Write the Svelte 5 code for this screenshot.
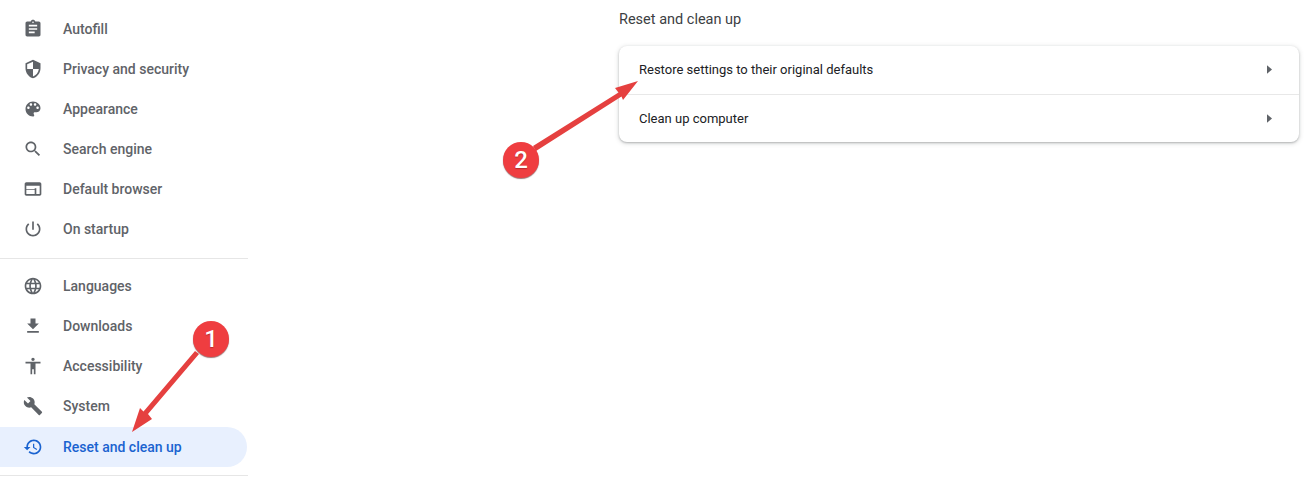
<script>
  const groupA = [
    { label: 'Autofill', d: 'M19 3h-4.18C14.4 1.84 13.3 1 12 1s-2.4.84-2.82 2H5c-1.1 0-2 .9-2 2v14c0 1.1.9 2 2 2h14c1.1 0 2-.9 2-2V5c0-1.1-.9-2-2-2zm-7 0c.55 0 1 .45 1 1s-.45 1-1 1-1-.45-1-1 .45-1 1-1zm2 14H7v-2h7v2zm3-4H7v-2h10v2zm0-4H7V7h10v2z' },
    { label: 'Privacy and security', d: 'M12 1 3 5v6c0 5.55 3.84 10.74 9 12 5.16-1.26 9-6.45 9-12V5l-9-4zm0 10.99h7c-.53 4.12-3.28 7.79-7 8.94V12H5V6.3l7-3.11v8.8z' },
    { label: 'Appearance', d: 'M12 3c-4.97 0-9 4.03-9 9s4.03 9 9 9c.83 0 1.5-.67 1.5-1.5 0-.39-.15-.74-.39-1.01-.23-.26-.38-.61-.38-.99 0-.83.67-1.5 1.5-1.5H16c2.76 0 5-2.24 5-5 0-4.42-4.03-8-9-8zm-5.5 9c-.83 0-1.5-.67-1.5-1.5S5.67 9 6.5 9 8 9.67 8 10.5 7.33 12 6.5 12zm3-4C8.67 8 8 7.33 8 6.5S8.67 5 9.5 5s1.5.67 1.5 1.5S10.33 8 9.5 8zm5 0c-.83 0-1.5-.67-1.5-1.5S13.67 5 14.5 5s1.5.67 1.5 1.5S15.33 8 14.5 8zm3 4c-.83 0-1.5-.67-1.5-1.5S16.67 9 17.5 9s1.5.67 1.5 1.5-.67 1.5-1.5 1.5z' },
    { label: 'Search engine', d: 'M15.5 14h-.79l-.28-.27C15.41 12.59 16 11.11 16 9.5 16 5.91 13.09 3 9.5 3S3 5.91 3 9.5 5.91 16 9.5 16c1.61 0 3.09-.59 4.23-1.57l.27.28v.79l5 4.99L20.49 19l-4.99-5zm-6 0C7.01 14 5 11.99 5 9.5S7.01 5 9.5 5 14 7.01 14 9.5 11.99 14 9.5 14z' },
    { label: 'Default browser', d: 'M20 4H4c-1.11 0-2 .9-2 2v12c0 1.1.89 2 2 2h16c1.1 0 2-.9 2-2V6c0-1.1-.89-2-2-2zm-6 14H4v-5h10v5zm6 0h-4v-7h-2v1H4V8h16v10z' },
    { label: 'On startup', d: 'M13 3h-2v10h2V3zm4.83 2.17-1.42 1.42C17.99 7.86 19 9.81 19 12c0 3.87-3.13 7-7 7s-7-3.13-7-7c0-2.19 1.01-4.14 2.58-5.42L6.17 5.17C4.23 6.82 3 9.26 3 12c0 4.97 4.03 9 9 9s9-4.03 9-9c0-2.74-1.23-5.18-3.17-6.83z' }
  ];
  const groupB = [
    { label: 'Languages', d: 'M11.99 2C6.47 2 2 6.48 2 12s4.47 10 9.99 10C17.52 22 22 17.52 22 12S17.52 2 11.99 2zm6.93 6h-2.95c-.32-1.25-.78-2.45-1.38-3.56 1.84.63 3.37 1.91 4.33 3.56zM12 4.04c.83 1.2 1.48 2.53 1.91 3.96h-3.82c.43-1.43 1.08-2.76 1.91-3.96zM4.26 14C4.1 13.36 4 12.69 4 12s.1-1.36.26-2h3.38c-.08.66-.14 1.32-.14 2s.06 1.34.14 2H4.26zm.82 2h2.95c.32 1.25.78 2.45 1.38 3.56-1.84-.63-3.37-1.9-4.33-3.56zm2.95-8H5.08c.96-1.66 2.49-2.93 4.33-3.56C8.81 5.55 8.35 6.75 8.03 8zM12 19.96c-.83-1.2-1.48-2.53-1.91-3.96h3.82c-.43 1.43-1.08 2.76-1.91 3.96zM14.34 14H9.66c-.09-.66-.16-1.32-.16-2s.07-1.35.16-2h4.68c.09.65.16 1.32.16 2s-.07 1.34-.16 2zm.25 5.56c.6-1.11 1.06-2.31 1.38-3.56h2.95c-.96 1.65-2.49 2.93-4.33 3.56zM16.36 14c.08-.66.14-1.32.14-2s-.06-1.34-.14-2h3.38c.16.64.26 1.31.26 2s-.1 1.36-.26 2h-3.38z' },
    { label: 'Downloads', d: 'M19 9h-4V3H9v6H5l7 7 7-7zM5 18v2h14v-2H5z' },
    { label: 'Accessibility', d: 'M12 2c1.1 0 2 .9 2 2s-.9 2-2 2-2-.9-2-2 .9-2 2-2zm9 7h-6v13h-2v-6h-2v6H9V9H3V7h18v2z' },
    { label: 'System', d: 'M22.7 19l-9.1-9.1c.9-2.3.4-5-1.5-6.9-2-2-5-2.4-7.4-1.3L9 6 6 9 1.6 4.7C.4 7.1.9 10.1 2.9 12.1c1.9 1.9 4.6 2.4 6.9 1.5l9.1 9.1c.4.4 1 .4 1.4 0l2.3-2.3c.5-.4.5-1.1.1-1.4z' },
    { label: 'Reset and clean up', active: true, d: 'M13 3c-4.97 0-9 4.03-9 9H1l3.89 3.89.07.14L9 12H6c0-3.87 3.13-7 7-7s7 3.13 7 7-3.13 7-7 7c-1.93 0-3.68-.79-4.94-2.06l-1.42 1.42C8.27 19.99 10.51 21 13 21c4.97 0 9-4.03 9-9s-4.03-9-9-9zm-1 5v5l4.28 2.54.72-1.21-3.5-2.08V8H12z' }
  ];
  const rows = ['Restore settings to their original defaults', 'Clean up computer'];
</script>

<div class="page">
  <nav class="sidebar">
    <ul class="group">
      {#each groupA as item}
        <li class="item">
          <svg class="icon" viewBox="0 0 24 24"><path d={item.d} /></svg>
          <span>{item.label}</span>
        </li>
      {/each}
    </ul>
    <hr class="rule" />
    <ul class="group">
      {#each groupB as item}
        <li class="item" class:active={item.active}>
          <svg class="icon" viewBox="0 0 24 24"><path d={item.d} /></svg>
          <span>{item.label}</span>
        </li>
      {/each}
    </ul>
    <hr class="rule end" />
  </nav>

  <main class="main">
    <h2 class="title">Reset and clean up</h2>
    <section class="card">
      {#each rows as row}
        <div class="row">
          <span>{row}</span>
          <svg class="caret" viewBox="0 0 6 10"><path d="M0 0l6 5-6 5z" /></svg>
        </div>
      {/each}
    </section>
  </main>

  <svg class="arrows" width="1309" height="479" viewBox="0 0 1309 479">
    <path class="arrow" d="M132 432 140 408 143.5 411.5 195 351 199 354 148 414 152 419z" />
    <path class="arrow" d="M638 81 615 88 618.5 92.5 533 146 536 151 621.5 96.5 623 100z" />
  </svg>
  <div class="badge one">1</div>
  <div class="badge two">2</div>
</div>

<style>
  :global(body) {
    margin: 0;
    background: #fff;
    overflow: hidden;
  }
  .page {
    position: relative;
    display: flex;
    width: 1309px;
    height: 479px;
    overflow: hidden;
    font-family: Roboto, "Liberation Sans", sans-serif;
  }
  .sidebar {
    flex: none;
    width: 248px;
    padding-top: 9px;
    box-sizing: border-box;
  }
  .group {
    list-style: none;
    margin: 0;
    padding: 0;
  }
  .rule {
    margin: 9px 0 7px;
    border: 0;
    height: 1px;
    background: #e6e6e6;
  }
  .rule.end {
    margin: 8px 0 0;
  }
  .item {
    display: flex;
    align-items: center;
    height: 40px;
    width: 247px;
    padding-left: 23px;
    box-sizing: border-box;
    border-radius: 0 20px 20px 0;
    color: #5f6368;
    font-size: 14px;
    font-weight: 500;
  }
  .item.active {
    margin-top: 1px;
    background: #e8f0fe;
    color: #1a63d0;
  }
  .icon {
    flex: none;
    width: 20px;
    height: 20px;
    margin-right: 20px;
    fill: #5f6368;
  }
  .item.active .icon {
    fill: #1a63d0;
  }
  .main {
    flex: none;
    width: 680px;
    margin-left: 371px;
  }
  .title {
    margin: 0;
    height: 46px;
    line-height: 39px;
    font-size: 14.5px;
    font-weight: 400;
    color: #3c4043;
  }
  .card {
    width: 680px;
    border-radius: 8px;
    background: #fff;
    box-shadow: 0 1px 2px rgba(60, 64, 67, 0.3), 0 1px 4px 1px rgba(60, 64, 67, 0.15);
  }
  .row {
    display: flex;
    align-items: center;
    justify-content: space-between;
    height: 48px;
    padding: 0 27px 0 20px;
    box-sizing: border-box;
    font-size: 13px;
    color: #202124;
  }
  .row:first-child {
    padding-bottom: 2px;
  }
  .row + .row {
    border-top: 1px solid #e8e8e8;
  }
  .caret {
    width: 5px;
    height: 9px;
    fill: #5f6368;
  }
  .arrows {
    position: absolute;
    inset: 0;
    pointer-events: none;
  }
  .arrow {
    fill: #e5403f;
  }
  .badge {
    position: absolute;
    width: 36px;
    height: 36px;
    border-radius: 50%;
    background: #ef3d40;
    box-shadow: 0 1px 1px rgba(90, 20, 20, 0.6);
    color: #fff;
    font-size: 24px;
    font-weight: 500;
    line-height: 36px;
    text-align: center;
    text-shadow: 0 1px 1px rgba(90, 20, 20, 0.4);
  }
  .one {
    left: 193px;
    top: 321px;
  }
  .two {
    left: 503px;
    top: 142px;
  }
</style>
